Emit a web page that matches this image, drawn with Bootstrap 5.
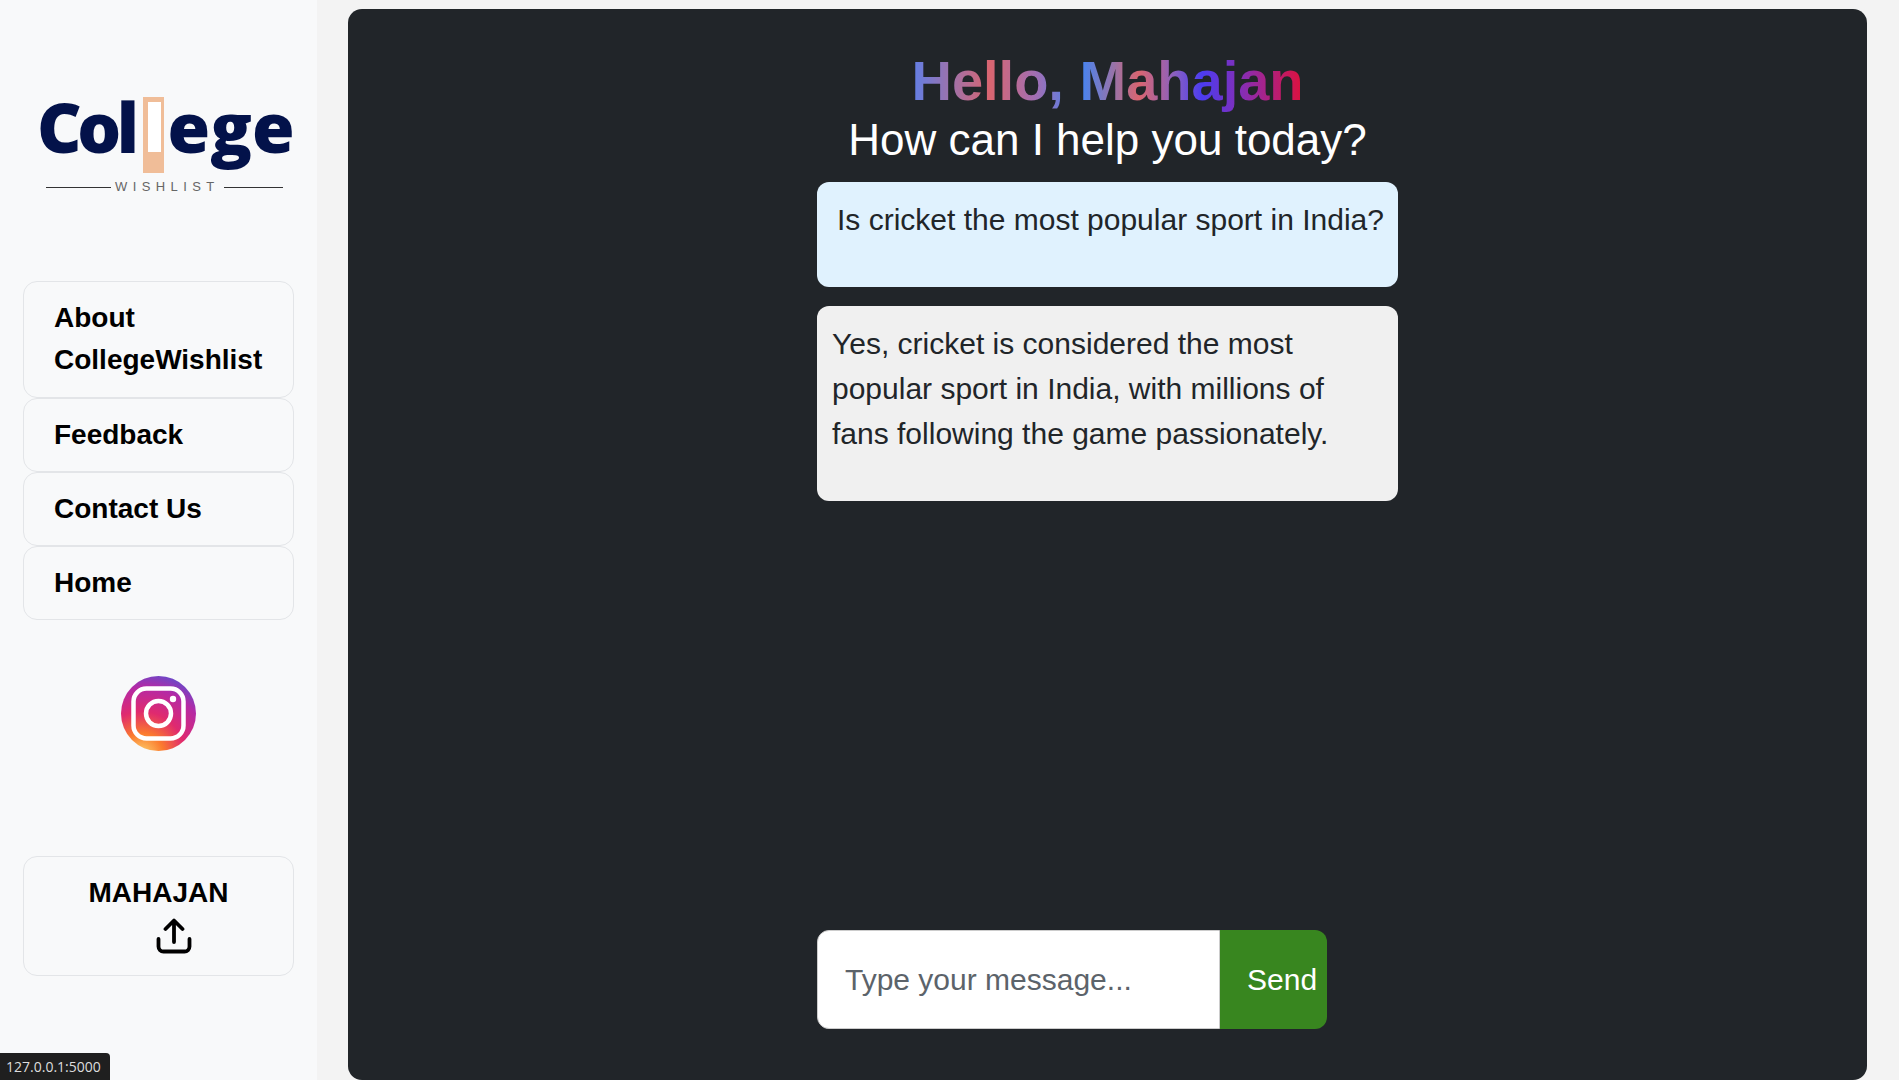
<!DOCTYPE html>
<html lang="en">
<head>
    <title>CollegeWishlist Chat</title>
    <link href="https://cdn.jsdelivr.net/npm/bootstrap@5.3.0/dist/css/bootstrap.min.css" rel="stylesheet">
    <style>
        body { background: #f3f3f3; font-family: "Liberation Sans", Arial, sans-serif; }
        .side-bar { width: 317px; background: #f8f9fa; padding: 0 23px; }
        .logo-box { height: 281px; padding: 97px 0 0 14px; }
        .logo-word { height: 76px; font-family: "Open Sans", sans-serif; font-weight: 800; font-size: 69px; line-height: 58px; color: #03124a; }
        .logo-col { letter-spacing: -4.5px; }
        .logo-book { width: 21px; height: 76px; margin: 0 4px 0 8px; background: #f0bd98; padding: 5px 3px 21px 5px; }
        .logo-book span { display: block; height: 100%; background: #fff; }
        .logo-tag { width: 237px; margin: 6px 0 0 9px; font-size: 13px; letter-spacing: 5.4px; color: #666; line-height: 16px; }
        .logo-rule { height: 1px; background: #333; flex: 1; }
        .logo-tag .logo-rule:first-child { flex: 0 0 65px; }
        .side-link { display: block; font-size: 28px; font-weight: 700; line-height: 42px; color: #000; text-decoration: none; padding: 15px 30px; border: 1px solid #e3e5e8; border-radius: 14px; }
        .side-link:first-of-type { padding-bottom: 16px; }
        .insta-box { height: 236px; padding-top: 56px; }
        .profile-box { font-size: 28px; font-weight: 700; line-height: 42px; color: #000; padding: 15px; border: 1px solid #e3e5e8; border-radius: 14px; height: 120px; }
        .upload-icon { display: block; margin: 4px 0 0 117px; }
        .chat-panel { margin: 9px 32px 0 31px; background: #212529; border-radius: 14px; height: calc(100vh - 9px); padding: 39px 0 51px; }
        .hello-text { font-size: 56px; font-weight: 700; line-height: 65px; margin: 0; background: linear-gradient(90deg, #5f7fe8 0%, #d96570 20%, #a06fb5 32%, #4285f4 43%, #d96570 58%, #8a60c0 67%, #4b3cf0 74%, #8a2cb0 85%, #e0103a 100%); -webkit-background-clip: text; background-clip: text; color: transparent; }
        .help-text { font-size: 44px; line-height: 53px; color: #fff; margin: 0 0 16px; }
        .chat-column { width: 581px; }
        .msg-box { font-size: 30px; line-height: 45px; color: #212529; border-radius: 12px; }
        .msg-user { background: #e0f2fe; padding: 15px 12px 45px 20px; margin-bottom: 19px; white-space: nowrap; }
        .msg-bot { background: #f0f0f0; padding: 15px 15px 45px; }
        .send-row { width: 510px; height: 99px; }
        .send-row input { width: 403px; font-size: 30px; padding: 0 27px; border: 1px solid #ccc; border-radius: 12px 0 0 12px; }
        .send-row input::placeholder { color: #5c636a; }
        .send-btn { width: 107px; font-size: 30px; color: #fff; background: #38861f; border: 0; border-radius: 0 12px 12px 0; padding: 0 10px 0 27px; text-align: left; }
        .status-tip { position: fixed; left: 0; bottom: 0; width: 110px; height: 27px; padding-left: 6px; background: #1f1f1f; color: #ddd; font-family: "Open Sans", sans-serif; font-size: 14px; line-height: 27px; border-top-right-radius: 4px; }
    </style>
</head>
<body class="overflow-hidden">
    <div class="d-flex vh-100 overflow-hidden">

        <!-- Sidebar -->
        <aside class="side-bar flex-shrink-0">
            <div class="logo-box">
                <div class="d-flex align-items-start logo-word"><span class="logo-col">Col</span><div class="logo-book flex-shrink-0"><span></span></div>ege</div>
                <div class="d-flex align-items-center logo-tag"><div class="logo-rule"></div><div class="px-1">WISHLIST</div><div class="logo-rule"></div></div>
            </div>
            <a class="side-link" href="#">About CollegeWishlist</a>
            <a class="side-link" href="#">Feedback</a>
            <a class="side-link" href="#">Contact Us</a>
            <a class="side-link" href="#">Home</a>
            <div class="insta-box d-flex justify-content-center">
                <svg width="75" height="75" viewBox="0 0 75 75" aria-label="Instagram">
                    <defs>
                        <radialGradient id="instaGrad" cx="0.28" cy="1.05" r="1.15">
                            <stop offset="0" stop-color="#fdd56f"/>
                            <stop offset="0.25" stop-color="#fb7a2e"/>
                            <stop offset="0.5" stop-color="#e02a6e"/>
                            <stop offset="0.78" stop-color="#b52aa5"/>
                            <stop offset="1" stop-color="#5a4fd0"/>
                        </radialGradient>
                    </defs>
                    <circle cx="37.5" cy="37.5" r="37.5" fill="url(#instaGrad)"/>
                    <rect x="12.5" y="12.5" width="50" height="50" rx="13" fill="none" stroke="#fff" stroke-width="4.5"/>
                    <circle cx="37.5" cy="37.5" r="12.5" fill="none" stroke="#fff" stroke-width="4.5"/>
                    <circle cx="52" cy="23" r="3.2" fill="#fff"/>
                </svg>
            </div>
            <div class="profile-box text-center">
                MAHAJAN
                <svg class="upload-icon" width="36" height="36" viewBox="0 0 36 36" fill="none" stroke="#000" stroke-width="3.8" stroke-linecap="round" stroke-linejoin="round">
                    <path d="M18 24V3M9.5 11 18 2.5 26.5 11"/>
                    <path d="M2.5 21v7.5a5 5 0 0 0 5 5h21a5 5 0 0 0 5-5V21"/>
                </svg>
            </div>
        </aside>

        <!-- Chat -->
        <main class="chat-panel flex-grow-1 d-flex flex-column align-items-center">
            <h1 class="hello-text">Hello, Mahajan</h1>
            <h2 class="help-text fw-normal">How can I help you today?</h2>
            <div class="chat-column d-flex flex-column flex-grow-1">
                <div class="msg-box msg-user">Is cricket the most popular sport in India?</div>
                <div class="msg-box msg-bot">Yes, cricket is considered the most popular sport in India, with millions of fans following the game passionately.</div>
                <form class="send-row d-flex mt-auto" onsubmit="return false">
                    <input type="text" placeholder="Type your message...">
                    <button type="submit" class="send-btn">Send</button>
                </form>
            </div>
        </main>
    </div>

    <div class="status-tip">127.0.0.1:5000</div>
</body>
</html>
